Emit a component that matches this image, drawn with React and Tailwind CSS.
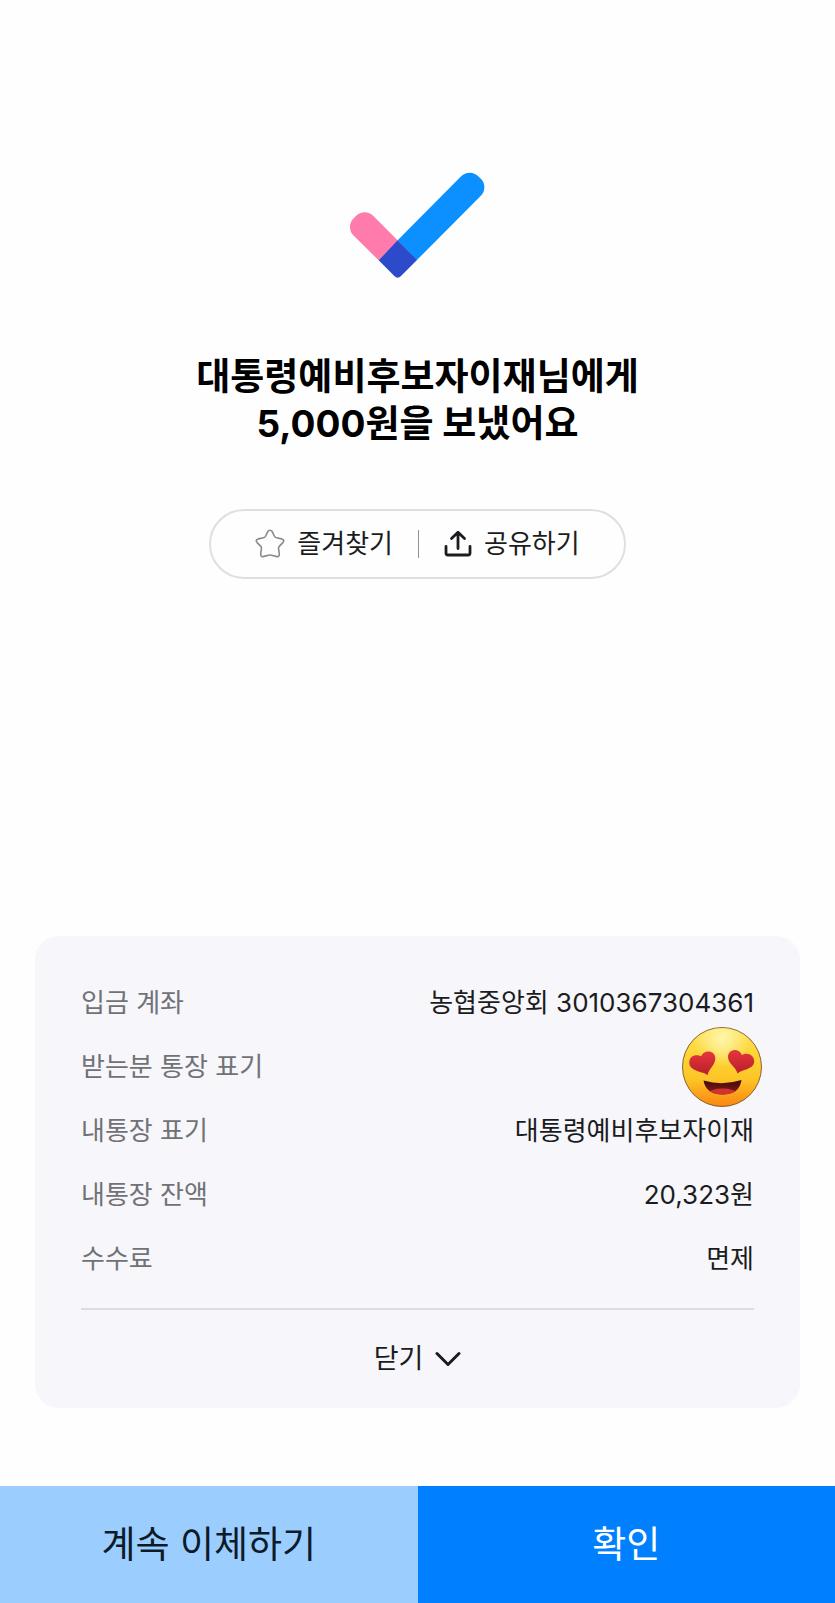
import { useState } from 'react';

const details = [
    { label: '입금 계좌', value: '농협중앙회 3010367304361' },
    { label: '받는분 통장 표기', value: <HeartEyes /> },
    { label: '내통장 표기', value: '대통령예비후보자이재' },
    { label: '내통장 잔액', value: '20,323원' },
    { label: '수수료', value: '면제' },
];

function CheckMark() {
    return (
        <svg viewBox="57 60 414 327" className="w-[138px] h-[109px]" aria-hidden="true">
            <path d="M70.5 253.5A36 36 0 0 1 70.5 202.5L78.5 194.5A36 36 0 0 1 129.5 194.5L204 269L146 328Z" fill="#ff7bac" />
            <path d="M203 268L393.5 75.5A36 36 0 0 1 444.5 75.5L452.5 83.5A36 36 0 0 1 452.5 134.5L260 328Z" fill="#0c8fff" />
            <path d="M203 268L261 327L213 375Q203 385 193 375L146 328Z" fill="#2b4bcb" />
        </svg>
    );
}

function StarIcon() {
    return (
        <svg viewBox="0 0 30 30" className="w-[30px] h-[30px]" fill="none" stroke="#8a8a8a" strokeWidth="1.6" strokeLinejoin="round" aria-hidden="true">
            <path d="M12.8 2.6Q15 -0.2 17.2 2.6L19.3 7Q20 8.5 21.6 8.8L26.6 9.9Q30.2 10.9 27.9 13.6L24.2 17.4Q23.4 18.3 23.6 19.7L24.3 25Q24.4 28.5 21.2 27.4L16.4 26.2Q15 25.9 13.6 26.2L8.8 27.4Q5.6 28.5 5.7 25L6.4 19.7Q6.6 18.3 5.8 17.4L2.1 13.6Q-0.2 10.9 3.4 9.9L8.4 8.8Q10 8.5 10.7 7Z" />
        </svg>
    );
}

function ShareIcon() {
    return (
        <svg viewBox="0 0 28 28" className="w-7 h-7" fill="none" stroke="#1b1c20" strokeWidth="2.8" strokeLinecap="round" strokeLinejoin="round" aria-hidden="true">
            <path d="M14 18.5V2.4M7.5 8.5L14 2.2L20.5 8.5" />
            <path d="M2 16.5V23Q2 25 4 25H24Q26 25 26 23V16.5" />
        </svg>
    );
}

function HeartEyes() {
    return (
        <svg viewBox="0 0 80 80" className="w-20 h-20 shrink-0 -mr-2" role="img" aria-label="😍">
            <defs>
                <linearGradient id="face" x1="0" y1="0" x2="0" y2="1">
                    <stop offset="0" stopColor="#fde45c" />
                    <stop offset="0.3" stopColor="#fdd73a" />
                    <stop offset="0.65" stopColor="#fdc526" />
                    <stop offset="1" stopColor="#fb8512" />
                </linearGradient>
                <radialGradient id="shine" cx="0.5" cy="0.14" r="0.36">
                    <stop offset="0" stopColor="#fff6ae" />
                    <stop offset="1" stopColor="#fff6ae" stopOpacity="0" />
                </radialGradient>
                <linearGradient id="heart" x1="0" y1="0" x2="0" y2="1">
                    <stop offset="0" stopColor="#e6363c" />
                    <stop offset="1" stopColor="#b91f2b" />
                </linearGradient>
                <linearGradient id="lips" x1="0" y1="0" x2="0" y2="1">
                    <stop offset="0" stopColor="#3d0c0b" />
                    <stop offset="1" stopColor="#8d1a17" />
                </linearGradient>
                <clipPath id="mouth">
                    <path d="M21.5 53.5Q40.5 59 59.5 53Q57.5 67.5 40.5 67.5Q24 67.5 21.5 53.5Z" />
                </clipPath>
            </defs>
            <circle cx="40" cy="40" r="39.5" fill="url(#face)" stroke="#7d5522" strokeWidth="0.9" />
            <circle cx="40" cy="40" r="39" fill="url(#shine)" />
            <path d="M25.7 48C21 44.5 8.5 44.5 7.3 36.5C6.5 28.5 14.5 27 19.3 29.3C21 23.5 31.5 22.3 33.2 30C34.2 37.5 27 41 25.7 48Z" fill="url(#heart)" />
            <path d="M55.6 46.5C54 40 45.5 36.5 46 29.3C47 21.5 57 21 60 28C65 25 73 28 72.2 35.5C70.5 43 60 42 55.6 46.5Z" fill="url(#heart)" />
            <path d="M21.5 53.5Q40.5 59 59.5 53Q57.5 67.5 40.5 67.5Q24 67.5 21.5 53.5Z" fill="url(#lips)" />
            <ellipse cx="40.5" cy="66.5" rx="14" ry="5" fill="#cf3431" clipPath="url(#mouth)" />
        </svg>
    );
}

function Chevron({ open }) {
    return (
        <svg viewBox="0 0 26 16" className={open ? 'w-[26px] h-4' : 'w-[26px] h-4 rotate-180'} fill="none" stroke="#1b1c20" strokeWidth="3" strokeLinecap="round" strokeLinejoin="round" aria-hidden="true">
            <path d="M2 2.5L13 13.5L24 2.5" />
        </svg>
    );
}

const App = () => {
    const [open, setOpen] = useState(true);

    return (
        <div className="min-h-screen flex flex-col bg-[#fefefe] text-[#1b1c20] text-[26px] leading-8 font-[Inter,'Noto_Sans_CJK_KR',sans-serif]">
            <main className="flex-1 flex flex-col items-center pt-[171px]">
                <CheckMark />

                <h1 className="mt-[73px] text-[37px] leading-[47px] font-bold text-center text-black">
                    대통령예비후보자이재님에게<br />
                    5,000원을 보냈어요
                </h1>

                <div className="mt-[62px] h-[70px] px-[44px] flex items-center gap-[25px] rounded-full border-2 border-[#dfdfe1]">
                    <button type="button" className="flex items-center gap-3">
                        <StarIcon />
                        즐겨찾기
                    </button>
                    <span className="w-px h-7 bg-[#929292]" />
                    <button type="button" className="flex items-center gap-3">
                        <ShareIcon />
                        공유하기
                    </button>
                </div>

                <section className="mt-auto mb-[78px] self-stretch mx-[35px] px-[46px] pt-[35px] rounded-3xl bg-[#f6f6fb]">
                    {open && (
                        <dl className="pb-[17px] border-b-2 border-[#dcdce1]">
                            {details.map(item => (
                                <div key={item.label} className="h-16 flex items-center justify-between">
                                    <dt className="text-[#717276]">{item.label}</dt>
                                    <dd>{item.value}</dd>
                                </div>
                            ))}
                        </dl>
                    )}
                    <button
                        type="button"
                        onClick={() => setOpen(!open)}
                        className="w-full h-[98px] flex items-center justify-center gap-3 text-[27px]"
                    >
                        {open ? '닫기' : '열기'}
                        <Chevron open={open} />
                    </button>
                </section>
            </main>

            <footer className="grid grid-cols-2 h-[117px] text-[37px]">
                <button type="button" className="bg-[#9bceff] text-[#0d1a2a]">계속 이체하기</button>
                <button type="button" className="bg-[#007fff] text-white">확인</button>
            </footer>
        </div>
    );
};

export default App;
